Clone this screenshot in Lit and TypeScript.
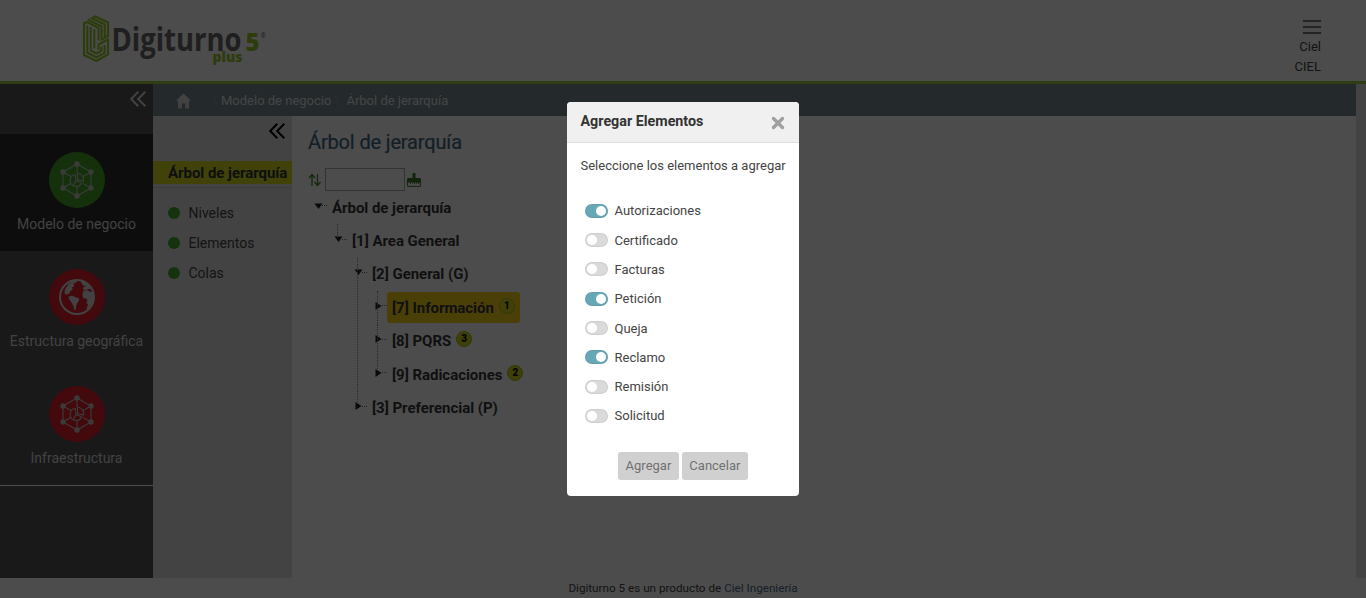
import { LitElement, html, css, svg, nothing } from "lit";
import { customElement, state } from "lit/decorators.js";
import { classMap } from "lit/directives/class-map.js";

interface TreeNode {
  label: string;
  open?: boolean;
  selected?: boolean;
  count?: number;
  children?: TreeNode[];
}

const TREE: TreeNode = {
  label: "Árbol de jerarquía",
  open: true,
  children: [
    {
      label: "[1] Area General",
      open: true,
      children: [
        {
          label: "[2] General (G)",
          open: true,
          children: [
            { label: "[7] Información", selected: true, count: 1 },
            { label: "[8] PQRS", count: 3 },
            { label: "[9] Radicaciones", count: 2 },
          ],
        },
        { label: "[3] Preferencial (P)" },
      ],
    },
  ],
};

const chevrons = html`<svg class="chevrons" viewBox="0 0 16 16" width="16" height="16">
  <path d="M8.3 .7 1.2 8l7.1 7.3M15.3 .7 8.2 8l7.1 7.3" fill="none" stroke="currentColor" stroke-width="2" />
</svg>`;

const network = svg`
  <g fill="none" stroke="#c4c4c4" stroke-width="1.1">
    <path d="M28 12 42 20V36L28 44 14 36V20Z" />
    <path d="M28 12V21M42 20l-8 4.500M42 36l-8-4.500M28 44V34M14 36l8-4.500M14 20l8 4.500" />
    <path d="M28.500 27.500V21.200a6.300 6.300 0 0 1 5.900 7.800Z" />
    <path d="M26.500 22.500a6 6 0 1 0 6.200 8.200L27 28.500Z" />
    <path d="M27 28.500l-2.800 5.600" />
  </g>
  <g fill="#c4c4c4">
    <circle cx="28" cy="12" r="2.700" /><circle cx="42" cy="20" r="2.700" /><circle cx="42" cy="36" r="2.700" />
    <circle cx="28" cy="44" r="2.700" /><circle cx="14" cy="36" r="2.700" /><circle cx="14" cy="20" r="2.700" />
  </g>`;

const globe = svg`
  <circle cx="28" cy="28" r="17" fill="none" stroke="#dcdcdc" stroke-width="2" />
  <g fill="#dcdcdc">
    <path d="M16 20.500 19.500 15l5-3 3.500-.5-.5 2-3 .8 .8 2.700-2.500 1.500 1 2-2.300 1.500-1.500 3-1.500-.5-1 1.500-2-1.500Z" />
    <path d="M19.500 27.500l3.500-.8 3 1.300 3.800 1.300 .2 2.200-2 3-1 3-.2 3.500-1.300-.2-1.200-4-2.300-4-2-2.800Z" />
    <path d="M29 11.200h3.500l6 3.500 3.500 5.500-3-.2-1.500 1-3.500-.5 .5-2.500 2.500-.8-3.500-1.200-1.500-3.200Z" />
    <path d="M34.500 21.500l4-.3 2 1.300 3.500 .5 .8 6-1.500 6-4.800 5.500-1-.5 1.500-4.500-1.500-1.500 1-3-1.500-1.500-3-.5-.5-4Z" />
  </g>`;

@customElement("app-root")
export class AppRoot extends LitElement {
  @state() private options = [
    { name: "Autorizaciones", on: true },
    { name: "Certificado", on: false },
    { name: "Facturas", on: false },
    { name: "Petición", on: true },
    { name: "Queja", on: false },
    { name: "Reclamo", on: true },
    { name: "Remisión", on: false },
    { name: "Solicitud", on: false },
  ];

  static styles = css`
    :host { display: block; position: relative; width: 100%; height: 598px; overflow: hidden; background: #fff;
      font-family: Roboto, "Liberation Sans", sans-serif; font-size: 14px; color: #333; }
    * { box-sizing: border-box; }
    svg { display: block; flex: none; }
    .page { display: flex; flex-direction: column; height: 598px; }
    .top { flex: none; display: flex; justify-content: space-between; height: 84px; border-bottom: 3px solid #99cf3c; padding: 0 45px 0 80px; }
    .user { display: flex; flex-direction: column; align-items: flex-end; padding-top: 20px; font-size: 13px; line-height: 20px; color: #444; }
    .burger { display: flex; flex-direction: column; gap: 4px; height: 17px; }
    .burger i { width: 18px; height: 2px; background: #6f7d87; }
    .main { flex: none; display: flex; height: 494px; }
    .side { width: 153px; background: #545454; color: #dcdcdc; }
    .side-head { height: 50px; display: flex; justify-content: flex-end; padding: 7px 7px 0 0; }
    .side-list { border-bottom: 1px solid #fff; }
    .side-item { height: 117px; display: flex; flex-direction: column; align-items: center; padding-top: 18px; white-space: nowrap; }
    .side-item.active { background: #2c2c2c; }
    .side-item span { margin-top: 7px; line-height: 19px; font-size: 14px; }
    .rest { flex: 1; }
    .crumbs { height: 32px; background: #788994; display: flex; align-items: center; color: #e6e6e6; font-size: 13px; padding: 1px 0 0 23px; }
    .crumbs svg { margin-right: 22px; }
    .sep { color: #8e9ba5; width: 8px; }
    .sep.mid { width: 15px; text-align: center; padding-right: 4px; }
    .body { display: flex; height: 462px; }
    .panel { width: 139px; background: #e2e2e2; color: #444; }
    .panel-head { height: 45px; display: flex; justify-content: flex-end; padding: 7px 7px 0 0; color: #000; }
    .panel-title { height: 23px; background: #d8dc20; padding-left: 15px; font-weight: 700; line-height: 25px; color: #333; white-space: nowrap; font-size: 15px; letter-spacing: -.04px; }
    .rule { height: 1px; margin: 3px 0 10px; background: #c8c8c8; }
    .panel-item { display: flex; align-items: center; gap: 8.500px; height: 30px; padding-left: 15px; }
    .panel-item i { width: 12px; height: 12px; border-radius: 50%; background: #44a82a; }
    .content { flex: 1; padding-left: 16px; }
    h1 { margin: 15px 0 14px; font-size: 20px; line-height: 23px; font-weight: 400; letter-spacing: -.15px; color: #3f6884; -webkit-text-stroke: .2px #3f6884; }
    .tools { display: flex; align-items: center; height: 23px; }
    .field { width: 80px; height: 23px; border: 1px solid #aaa; margin: 0 2px 0 4px; }
    .tree { padding: 0 0 0 6px; font-weight: 700; font-size: 15px; letter-spacing: -.04px; color: #383838; }
    .kids { margin-left: 20px; }
    .item { position: relative; }
    .kids > .item::before { content: ""; position: absolute; left: 3px; top: 0; bottom: 0; border-left: 1px dotted #8a8a8a; }
    .kids > .item:last-child::before { bottom: auto; height: 13px; }
    .row { display: flex; align-items: center; height: 33.400px; white-space: nowrap; }
    .arrow { margin-bottom: 4px; }
    .dots { width: 5px; border-top: 1px dotted #777; margin: 0 0 4px -2px; }
    .label { display: flex; align-items: center; height: 31px; padding: 0 5px; border-radius: 3px; }
    .label.sel { background: #fcd21c; }
    .badge { width: 16px; height: 16px; border-radius: 50%; margin: 0 0 4px 5px; background: #d0d320; border: 1px solid #a9b820;
      font-size: 10px; line-height: 14px; text-align: center; color: #111; }
    .sel .badge { background: #dcd820; }
    .scroll { width: 10px; background: #dfdfdf; }
    .foot { flex: 1; text-align: center; font-size: 11.700px; line-height: 20px; color: #444; border-bottom: 1px solid #fff0f4; }
    .foot span { color: #47708c; }
    .veil { position: absolute; inset: 0; display: flex; justify-content: center; align-items: flex-start; padding-top: 102px; background: rgba(0, 0, 0, .7); }
    .modal { width: 232px; height: 394px; background: #fff; border-radius: 4px; overflow: hidden; color: #444; font-size: 13px; }
    .modal-head { display: flex; justify-content: space-between; height: 41px; background: #f0f0f0; border-bottom: 1px solid #ddd; padding: 10px 14px 0 13.500px;
      font-size: 14.300px; font-weight: 700; line-height: 19px; color: #333; }
    .modal-head svg { margin-top: 4px; }
    .prompt { padding: 15px 0 0 13.500px; line-height: 16px; white-space: nowrap; }
    .options { padding: 22.200px 0 0 18px; }
    .option { display: flex; align-items: center; gap: 6.500px; height: 29.300px; cursor: pointer; }
    .switch { width: 23px; height: 14px; border-radius: 7px; padding: 2px; background: #dadada; display: flex; box-shadow: inset 0 0 1px 1px rgba(0, 0, 0, .06); }
    .switch i { width: 10px; height: 10px; border-radius: 50%; background: #fff; }
    .switch.on { background: #67a8b6; justify-content: flex-end; }
    .actions { display: flex; justify-content: center; gap: 3px; padding-top: 21.800px; }
    .btn { height: 28px; padding: 0 7.500px 2px; border: 0; border-radius: 3px; background: #d0d0d0; color: #707070; font: inherit; }
  `;

  private toggle(index: number) {
    this.options = this.options.map((o, i) => (i === index ? { ...o, on: !o.on } : o));
  }

  private node(n: TreeNode): unknown {
    return html`<div class="item">
      <div class="row">
        <svg class="arrow" width="10" height="10" viewBox="0 0 10 10">
          <path d=${n.open ? "M.5 2.500h8L4.500 8Z" : "M1.500 1v8L7.500 5Z"} fill="#222" />
        </svg>
        <i class="dots"></i>
        <span class=${classMap({ label: true, sel: !!n.selected })}>${n.label}${n.count ? html`<b class="badge">${n.count}</b>` : nothing}</span>
      </div>
      ${n.children ? html`<div class="kids">${n.children.map((c) => this.node(c))}</div>` : nothing}
    </div>`;
  }

  private sideItem(label: string, color: string, icon: unknown, active = false) {
    return html`<div class=${classMap({ "side-item": true, active })}>
      <svg width="56" height="56" viewBox="0 0 56 56"><circle cx="28" cy="28" r="28" fill=${color} />${icon}</svg>
      <span>${label}</span>
    </div>`;
  }

  render() {
    return html`
      <div class="page">
        <header class="top">
          <svg width="190" height="80" viewBox="80 0 190 80">
            <g fill="none" stroke="#98c82c" stroke-width="2.100">
              <path d="M84 22.500V55L96.500 61 108 54.500V39.500L98.500 44.500V50" />
              <path d="M84 23.500 87 22 98.500 28V40.500" />
              <path d="M87.300 25.500V52.800L96.500 57.300 104.600 52.800V45" />
              <path d="M90.700 27V50.500L96.500 53.500 101.300 50.800V46.500" />
              <path d="M94.300 29V48.500" />
              <path d="M88 19.500 101.500 26.500V39.500L108 36V22.500L95.500 16.500 92 18.200 104.800 24.500V37" />
            </g>
            <text x="111.500" y="51" font-family="Open Sans" font-weight="700" font-size="33" fill="#686868" textLength="130" lengthAdjust="spacingAndGlyphs">Digiturno</text>
            <text x="245.500" y="51" font-family="Open Sans" font-weight="800" font-size="25" fill="#98c82c" textLength="14" lengthAdjust="spacingAndGlyphs">5</text>
            <text x="260.500" y="38" font-family="Open Sans" font-size="6.500" fill="#686868">®</text>
            <text x="212.500" y="62" font-family="Open Sans" font-weight="800" font-size="14" fill="#98c82c" textLength="30" lengthAdjust="spacingAndGlyphs">plus</text>
          </svg>
          <div class="user">
            <div class="burger"><i></i><i></i><i></i></div>
            <span>Ciel</span><span>CIEL</span>
          </div>
        </header>
        <div class="main">
          <nav class="side">
            <div class="side-head">${chevrons}</div>
            <div class="side-list">
              ${this.sideItem("Modelo de negocio", "#43a62b", network, true)}
              ${this.sideItem("Estructura geográfica", "#e01f2b", globe)}
              ${this.sideItem("Infraestructura", "#e01f2b", network)}
            </div>
          </nav>
          <div class="rest">
            <div class="crumbs">
              <svg width="15" height="16" viewBox="0 0 15 16"><path d="M7.500 .5 0 7.700h2V14.500q0 1 1 1h2.800V10.500h3.400v5H12q1 0 1-1V7.700h2Z" fill="#ddd" /></svg>
              <span class="sep">\\</span><span>Modelo de negocio</span>
              <span class="sep mid">\\</span><span>Árbol de jerarquía</span>
            </div>
            <div class="body">
              <aside class="panel">
                <div class="panel-head">${chevrons}</div>
                <div class="panel-title">Árbol de jerarquía</div>
                <div class="rule"></div>
                ${["Niveles", "Elementos", "Colas"].map((t) => html`<div class="panel-item"><i></i>${t}</div>`)}
              </aside>
              <section class="content">
                <h1>Árbol de jerarquía</h1>
                <div class="tools">
                  <svg width="13" height="14" viewBox="0 0 13 14"><path d="M4 13V2M1 5l3-3.500L7 5M9.500 1v11M6.500 9l3 3.500 3-3.500" fill="none" stroke="#43862b" stroke-width="1.300" /></svg>
                  <div class="field"></div>
                  <svg width="14" height="14" viewBox="0 0 14 14"><path d="M5.500 0h3v5h4q1.500 0 1.500 1.500V9.500H0V6.500Q0 5 1.500 5h4Z" fill="#3c7a2b" /><path d="M.6 9V13.400H13.400V9M3.500 9v2M5.500 9v1.500M7.500 9v2M9.500 9v1.500M11.500 9v2" fill="none" stroke="#3c7a2b" /></svg>
                </div>
                <div class="tree">${this.node(TREE)}</div>
              </section>
            </div>
          </div>
          <div class="scroll"></div>
        </div>
        <footer class="foot">Digiturno 5 es un producto de <span>Ciel Ingeniería</span></footer>
      </div>
      <div class="veil">
        <div class="modal">
          <div class="modal-head">Agregar Elementos
            <svg width="14" height="14" viewBox="0 0 14 14"><path d="M2.500 2.500l9 9M11.500 2.500l-9 9" stroke="#a0a0a0" stroke-width="3.400" stroke-linecap="round" /></svg>
          </div>
          <div class="prompt">Seleccione los elementos a agregar</div>
          <div class="options">
            ${this.options.map((o, i) => html`<div class="option" @click=${() => this.toggle(i)}>
              <span class=${classMap({ switch: true, on: o.on })}><i></i></span>${o.name}
            </div>`)}
          </div>
          <div class="actions"><button class="btn">Agregar</button><button class="btn">Cancelar</button></div>
        </div>
      </div>
    `;
  }
}
